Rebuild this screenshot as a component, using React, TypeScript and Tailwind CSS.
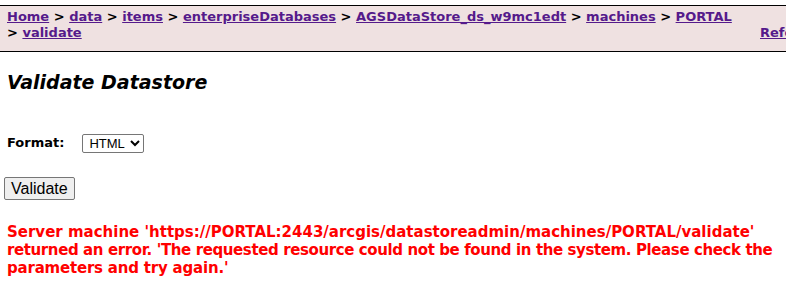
import React from 'react';

const crumbs = ['Home', 'data', 'items', 'enterpriseDatabases', 'AGSDataStore_ds_w9mc1edt', 'machines', 'PORTAL'];

export default function App() {
    return (
        <div className="w-[786px] h-[291px] overflow-hidden bg-white font-['DejaVu_Sans',Verdana,sans-serif]">
            {/* Breadcrumb bar */}
            <div className="mt-[5px] w-[850px] h-[47px] bg-[#efe1e1] border-y border-black flex pl-[7px] pt-[3px] text-[13px] leading-[16px] font-bold">
                <div className="w-[753px] shrink-0">
                    {crumbs.map((c, i) => (
                        <React.Fragment key={c}>
                            <a href="#" className="text-[#551a8b] underline">{c}</a>
                            {i < crumbs.length - 1 ? ' > ' : ' '}
                        </React.Fragment>
                    ))}
                    <br />
                    {'> '}
                    <a href="#" className="text-[#551a8b] underline">validate</a>
                </div>
                <div className="mt-[16px]">
                    <a href="#" className="text-[#551a8b] underline">Reference</a>
                </div>
            </div>

            <div className="px-[7px]">
                <h2 className="mt-[19px] text-[19px] leading-[22px] font-bold italic text-black">Validate Datastore</h2>

                <div className="mt-[40px] flex items-center h-[20px]">
                    <span className="text-[13px] font-bold text-black">Format:</span>
                    <select className="ml-[18px] h-[19px] border border-[#767676] rounded-[2px] text-[13px] font-['Liberation_Sans',Arial,sans-serif] px-[2px] appearance-auto bg-white">
                        <option>HTML</option>
                        <option>JSON</option>
                    </select>
                </div>

                <button className="mt-[24px] -ml-[3px] h-[23px] px-[6px] border border-[#767676] rounded-[2px] bg-[#efefef] text-[16px] leading-[20px] font-['Liberation_Sans',Arial,sans-serif] text-black">
                    Validate
                </button>

                <p className="mt-[22px] text-[15px] leading-[18px] font-bold text-[#ff0000] whitespace-nowrap">
                    Server machine 'https://PORTAL:2443/arcgis/datastoreadmin/machines/PORTAL/validate'
                    <br />
                    <span className="tracking-[-0.39px]">returned an error. 'The requested resource could not be found in the system. Please check the</span>
                    <br />
                    <span className="tracking-[-0.2px]">parameters and try again.'</span>
                </p>
            </div>
        </div>
    );
}
